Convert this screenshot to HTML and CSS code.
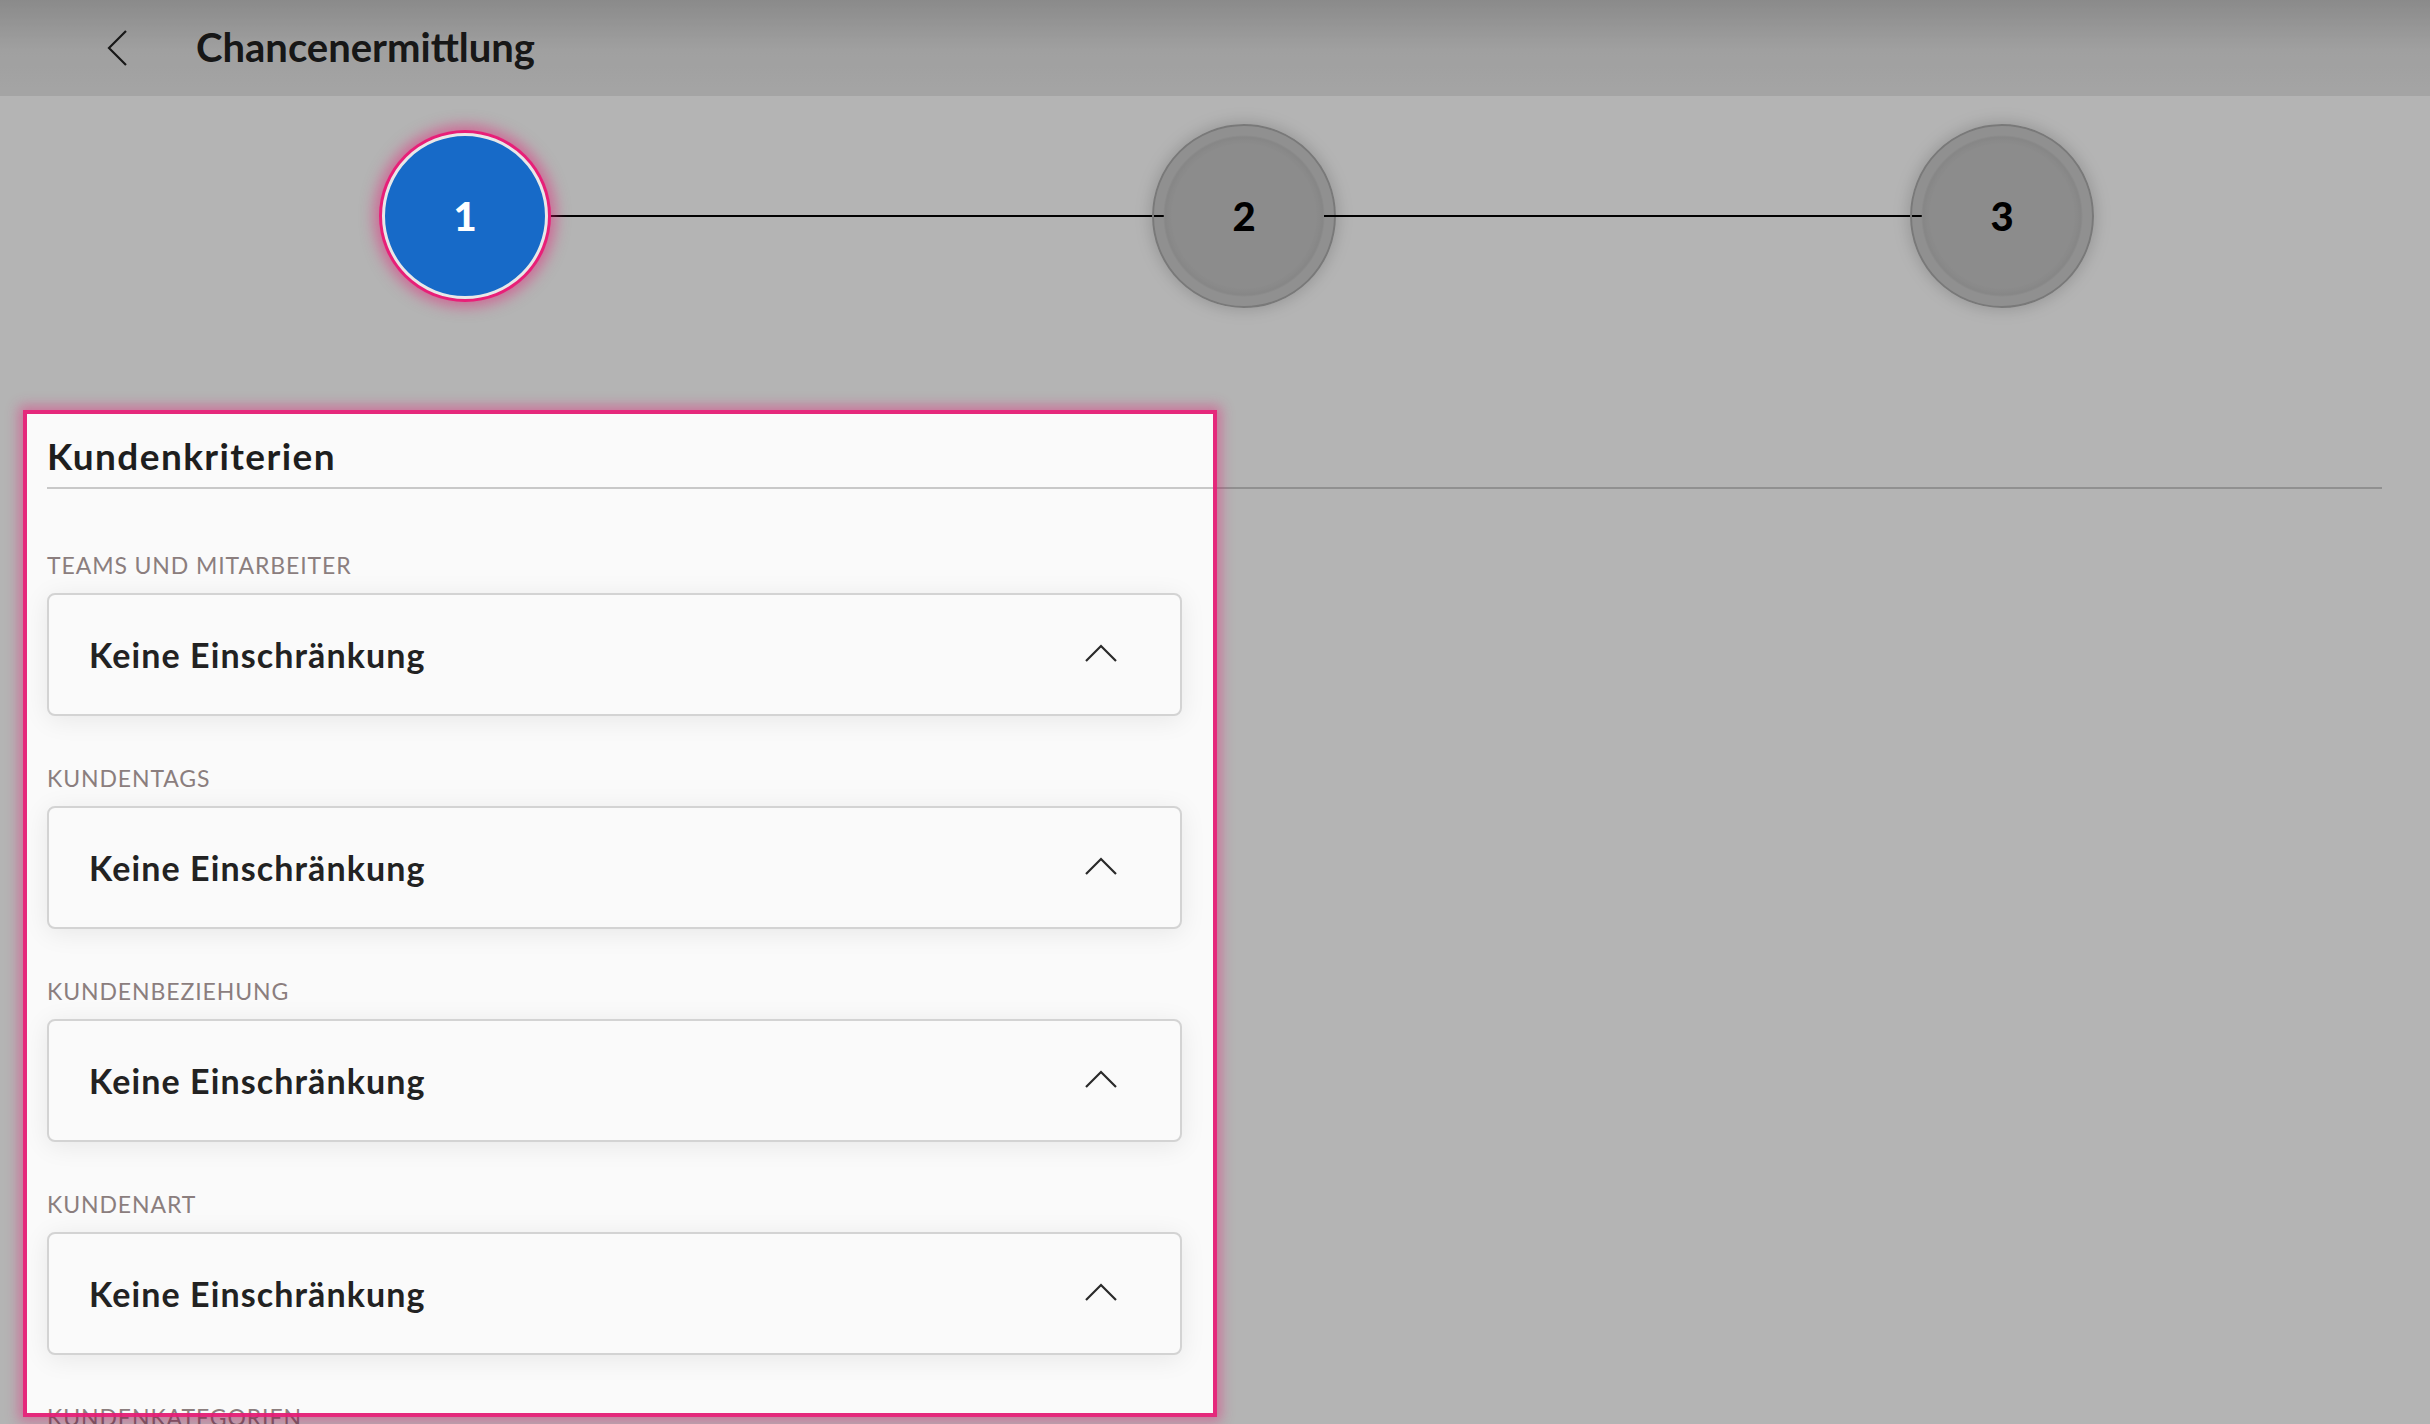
FILE: index.html
```html
<!DOCTYPE html>
<html>
<head>
<link rel="stylesheet" href="styles.css">
</head>
<body>

<div class="app-header">
  <button class="back-button" aria-label="Zurück">
    <svg width="22" height="38" viewBox="0 0 22 38"><polyline points="20,2 3,19 20,36" fill="none" stroke="#222" stroke-width="2.2"/></svg>
  </button>
  <h1 class="app-title">Chancenermittlung</h1>
</div>

<div class="stepper">
  <div class="step-circle step-active">1</div>
  <div class="step-line step-line-first"></div>
  <div class="step-circle">2</div>
  <div class="step-line step-line-second"></div>
  <div class="step-circle">3</div>
</div>

<div class="content">
  <h2 class="section-title">Kundenkriterien</h2>
  <hr class="section-rule">

  <div class="criteria-list">
    <div class="criteria-group">
      <div class="criteria-label">TEAMS UND MITARBEITER</div>
      <div class="criteria-select">
        <span>Keine Einschränkung</span>
        <svg width="34" height="19" viewBox="0 0 34 19"><polyline points="2,17 17,2 32,17" fill="none" stroke="#2a2a2a" stroke-width="2.2"/></svg>
      </div>
    </div>
    <div class="criteria-group">
      <div class="criteria-label">KUNDENTAGS</div>
      <div class="criteria-select">
        <span>Keine Einschränkung</span>
        <svg width="34" height="19" viewBox="0 0 34 19"><polyline points="2,17 17,2 32,17" fill="none" stroke="#2a2a2a" stroke-width="2.2"/></svg>
      </div>
    </div>
    <div class="criteria-group">
      <div class="criteria-label">KUNDENBEZIEHUNG</div>
      <div class="criteria-select">
        <span>Keine Einschränkung</span>
        <svg width="34" height="19" viewBox="0 0 34 19"><polyline points="2,17 17,2 32,17" fill="none" stroke="#2a2a2a" stroke-width="2.2"/></svg>
      </div>
    </div>
    <div class="criteria-group">
      <div class="criteria-label">KUNDENART</div>
      <div class="criteria-select">
        <span>Keine Einschränkung</span>
        <svg width="34" height="19" viewBox="0 0 34 19"><polyline points="2,17 17,2 32,17" fill="none" stroke="#2a2a2a" stroke-width="2.2"/></svg>
      </div>
    </div>
    <div class="criteria-group">
      <div class="criteria-label">KUNDENKATEGORIEN</div>
      <div class="criteria-select">
        <span>Keine Einschränkung</span>
        <svg width="34" height="19" viewBox="0 0 34 19"><polyline points="2,17 17,2 32,17" fill="none" stroke="#2a2a2a" stroke-width="2.2"/></svg>
      </div>
    </div>
  </div>
</div>

<!-- Tour: dunkles Overlay mit Ausschnitt um die Kundenkriterien -->
<div class="tour-spotlight"></div>

</body>
</html>
```

FILE: styles.css
```css
html, body {
  margin: 0;
  overflow: hidden;
  height: 100%;
}

body {
  background-color: #fafafa;
  font-family: Lato, "Liberation Sans", sans-serif;
  color: #222;
}

.app-header {
  height: 96px;
  display: flex;
  align-items: center;
  background: linear-gradient(#c0c0c0 0, #dedede 50px, #e4e4e4 96px);
}

.back-button {
  background: none;
  border: 0;
  padding: 0;
  margin: 0 0 0 106px;
  width: 22px;
  height: 38px;
  display: flex;
}

.app-title {
  margin: 0 0 3px 68px;
  font-size: 40px;
  font-weight: 700;
  line-height: 48px;
  color: #202020;
}

.stepper {
  display: flex;
  align-items: center;
  padding: 28px 0 28px 382px;
}

.step-circle {
  width: 184px;
  height: 184px;
  box-sizing: border-box;
  border-radius: 50%;
  border: 2px solid #a8a8a8;
  background: radial-gradient(circle, #c2c2c2 0, #c2c2c2 72px, #bbbbbb 79px, rgba(0, 0, 0, 0.2) 81px);
  box-shadow: 0 0 18px rgba(0, 0, 0, 0.2);
  display: flex;
  align-items: center;
  justify-content: center;
  font-size: 40px;
  font-weight: 900;
  color: #000;
  flex-shrink: 0;
}

.step-active {
  width: 166px;
  height: 166px;
  border: 3px solid #e8e8e8;
  background: #176ac8;
  color: #fff;
  position: relative;
  z-index: 20;
  box-shadow: 0 0 0 3px #e81f78, 0 0 14px 8px rgba(232, 31, 120, 0.5);
}

.step-line {
  height: 2px;
  background-color: #000;
  flex-shrink: 0;
}

.step-line-first {
  width: 616px;
  margin-right: -12px;
}

.step-line-second {
  width: 598px;
  margin: 0 -12px;
}

.content {
  padding: 0 48px 0 47px;
}

.section-title {
  margin: 0;
  padding-top: 98px;
  font-size: 37px;
  font-weight: 700;
  line-height: 44px;
  letter-spacing: 1.4px;
  color: #1e1e1e;
}

.section-rule {
  margin: 9px 0 0;
  border: 0;
  height: 2px;
  background-color: #c8c8c8;
}

.criteria-list {
  width: 1135px;
  padding-top: 62px;
  display: flex;
  flex-direction: column;
  gap: 48px;
}

.criteria-label {
  font-size: 23px;
  line-height: 28px;
  letter-spacing: 0.9px;
  color: #8b7e7e;
  margin-bottom: 14px;
}

.criteria-select {
  height: 123px;
  box-sizing: border-box;
  border: 2px solid #d3d3d3;
  border-radius: 8px;
  background-color: #fafafa;
  box-shadow: 0 4px 26px rgba(0, 0, 0, 0.08);
  display: flex;
  align-items: center;
  justify-content: space-between;
  padding: 0 62px 0 40px;
  font-size: 34px;
  font-weight: 700;
  letter-spacing: 1.1px;
  color: #222;
}

.criteria-select svg {
  margin-top: -2px;
}

.tour-spotlight {
  position: absolute;
  left: 27px;
  top: 414px;
  width: 1186px;
  height: 999px;
  z-index: 10;
  pointer-events: none;
  box-shadow: 0 0 0 4px rgba(232, 31, 120, 0.9), 0 0 12px 8px rgba(232, 31, 120, 0.45), 0 0 0 4000px rgba(0, 0, 0, 0.28);
}
```
